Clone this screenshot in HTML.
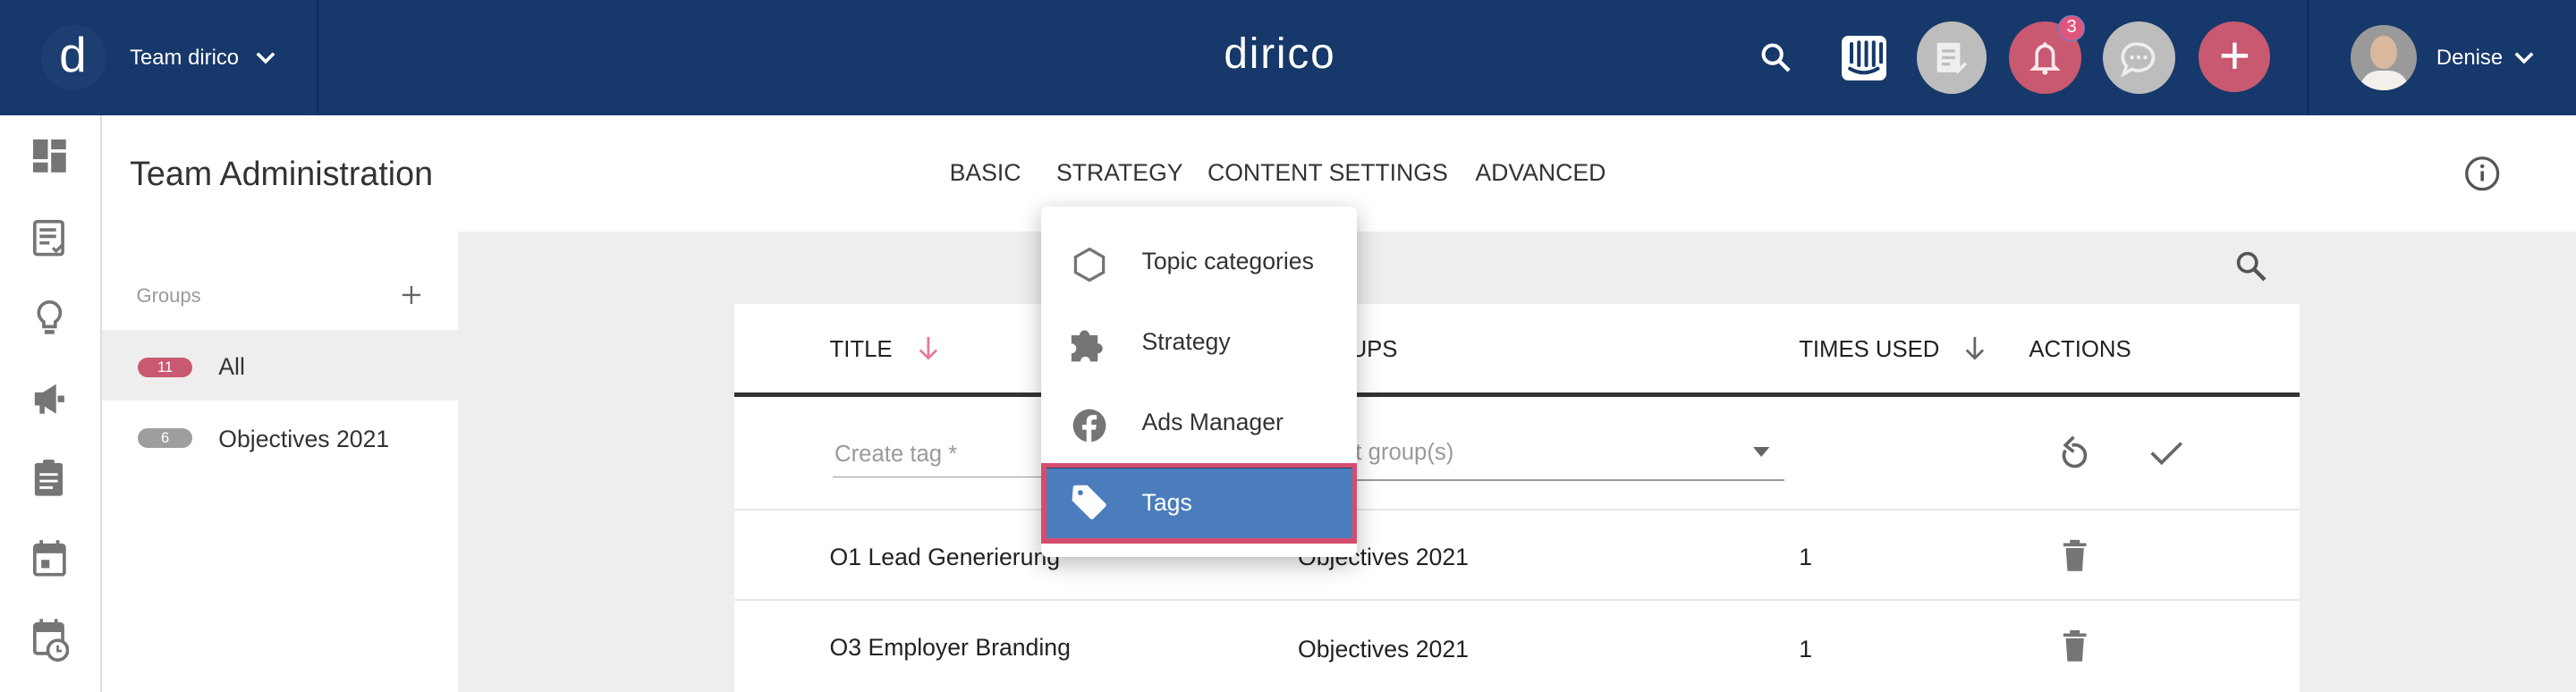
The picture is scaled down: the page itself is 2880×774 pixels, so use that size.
<!DOCTYPE html>
<html><head><meta charset="utf-8"><style>
html,body{margin:0;padding:0;width:2880px;height:774px;overflow:hidden;background:#fff}
#r{zoom:1.83673;width:1568px;height:422px;position:relative;font-family:"Liberation Sans",sans-serif;color:#333;overflow:hidden}
.a{position:absolute}
.hdr{left:0;top:0;width:1568px;height:70px;background:#16386a}
.t{white-space:nowrap}
.circ{border-radius:50%}
.tab{top:97px;font-size:14.5px;color:#333}
.mi{left:0;width:192px;height:49px}
.mi span{position:absolute;left:61px;top:16px;font-size:14.5px;color:#333}
.mi svg{position:absolute;left:17px;top:14px}
.rowtxt{font-size:14.5px;color:#222}
</style></head><body><div id="r">
<div class="a hdr"></div>
<div class="a" style="left:193px;top:0;width:1px;height:70px;background:#0f2c58"></div>
<div class="a" style="left:1404px;top:0;width:1px;height:70px;background:#0f2c58"></div>
<div class="a circ" style="left:25px;top:15px;width:40px;height:40px;background:#1d3e70"></div>
<div class="a t" style="left:36px;top:16px;font-size:30px;color:#fff;font-weight:300">d</div>
<div class="a t" style="left:79px;top:28px;font-size:13px;color:#fff">Team dirico</div>
<svg class="a" style="left:155px;top:31px" width="13" height="9" viewBox="0 0 13 9"><path d="M1.5 1.5l5 5 5-5" stroke="#fff" stroke-width="2" fill="none"/></svg>
<div class="a t" style="left:745px;top:18px;font-size:26px;color:#fff;letter-spacing:1px">dirico</div>
<svg class="a" style="left:1071px;top:25px" width="20" height="20" viewBox="0 0 20 20"><circle cx="8" cy="8" r="5.5" stroke="#fff" stroke-width="2.2" fill="none"/><path d="M12 12l6 6" stroke="#fff" stroke-width="2.4"/></svg>
<div class="a" style="left:1121px;top:22px;width:27px;height:27px;background:#fff;border-radius:4px"></div>
<svg class="a" style="left:1121px;top:22px" width="27" height="27" viewBox="0 0 27 27"><g stroke="#16386a" stroke-width="2.2" stroke-linecap="round"><path d="M6 5v11M10.5 4v14M15 4v14M19.5 4v14M24 5v11"/><path d="M5 20q8.5 5 17 0" fill="none"/></g></svg>
<div class="a circ" style="left:1167px;top:13px;width:42px;height:44px;background:#bdbdbd"></div>
<svg class="a" style="left:1177px;top:25px" width="22" height="22" viewBox="0 0 22 22"><rect x="2" y="1" width="14" height="18" rx="1" fill="#eee"/><path d="M5 6h8M5 10h8M5 14h5" stroke="#bdbdbd" stroke-width="1.8"/><path d="M12 16l2.5 2.5 5-5" stroke="#eee" stroke-width="2" fill="none"/></svg>
<div class="a circ" style="left:1223px;top:13px;width:44px;height:44px;background:#c85970"></div>
<svg class="a" style="left:1235px;top:24px" width="20" height="22" viewBox="0 0 20 22"><path d="M5 16V9a5 5 0 0 1 10 0v7l2 2H3z" fill="none" stroke="#fce8ee" stroke-width="2"/><circle cx="10" cy="20" r="1.6" fill="#fce8ee"/><circle cx="10" cy="3" r="1.2" fill="#fce8ee"/></svg>
<div class="a circ" style="left:1253px;top:9px;width:16px;height:16px;background:#e0557e;border:1px solid #5a8ad0;box-sizing:border-box;color:#fff;font-size:11px;text-align:center;line-height:14px">3</div>
<div class="a circ" style="left:1280px;top:13px;width:44px;height:44px;background:#bdbdbd"></div>
<svg class="a" style="left:1290px;top:24px" width="24" height="24" viewBox="0 0 24 24"><path d="M12 3a9 8 0 1 1-4 15.2L3 21l1.6-4.6A8 8 0 0 1 12 3z" fill="none" stroke="#eee" stroke-width="2"/><circle cx="8" cy="11" r="1.2" fill="#eee"/><circle cx="12" cy="11" r="1.2" fill="#eee"/><circle cx="16" cy="11" r="1.2" fill="#eee"/></svg>
<div class="a circ" style="left:1338px;top:13px;width:44px;height:43px;background:#c85970"></div>
<svg class="a" style="left:1350px;top:24px" width="20" height="20"><path d="M10 2v16M2 10h16" stroke="#fff" stroke-width="2.4"/></svg>
<div class="a circ" style="left:1431px;top:15px;width:40px;height:40px;background:#9a9a9a;overflow:hidden"><div class="a circ" style="left:12px;top:7px;width:16px;height:20px;background:#d9b8a0"></div><div class="a" style="left:5px;top:28px;width:30px;height:16px;background:#f3f0ec;border-radius:12px 12px 0 0"></div></div>
<div class="a t" style="left:1483px;top:28px;font-size:13px;color:#fff">Denise</div>
<svg class="a" style="left:1530px;top:31px" width="13" height="9" viewBox="0 0 13 9"><path d="M1.5 1.5l5 5 5-5" stroke="#fff" stroke-width="2" fill="none"/></svg>

<div class="a" style="left:61px;top:70px;width:1px;height:352px;background:#ddd"></div>
<svg class="a" style="left:20px;top:85px" width="22" height="320" viewBox="0 0 22 320" fill="#757575">
<rect x="0" y="0" width="9" height="12"/><rect x="11" y="0" width="9" height="6"/><rect x="0" y="14" width="9" height="6"/><rect x="11" y="8" width="9" height="12"/>
<g transform="translate(0,50)"><rect x="1" y="0" width="17" height="20" rx="1.5" fill="none" stroke="#757575" stroke-width="2"/><path d="M4 5h10M4 9h10M4 13h6" stroke="#757575" stroke-width="2"/><path d="M12 16l2 2 4-4" stroke="#757575" stroke-width="1.8" fill="none"/></g>
<g transform="translate(0,98)"><path d="M10 1a6.5 6.5 0 0 0-3.5 12v3h7v-3A6.5 6.5 0 0 0 10 1z" fill="none" stroke="#757575" stroke-width="2"/><rect x="7" y="18" width="6" height="2.5"/></g>
<g transform="translate(0,148)"><path d="M1 6h5l8-5v18l-8-5H1z"/><rect x="4" y="14" width="3" height="5"/><rect x="15" y="8" width="4" height="4"/></g>
<g transform="translate(0,195)"><rect x="1" y="2" width="17" height="20" rx="1.5"/><rect x="6" y="0" width="7" height="4" rx="1"/><path d="M4 9h11M4 13h11M4 17h8" stroke="#fff" stroke-width="1.6"/></g>
<g transform="translate(0,244)"><rect x="1" y="3" width="18" height="18" rx="1.5" fill="none" stroke="#757575" stroke-width="2"/><rect x="1" y="3" width="18" height="5"/><rect x="4" y="0" width="2" height="5"/><rect x="14" y="0" width="2" height="5"/><rect x="5" y="12" width="5" height="5"/></g>
<g transform="translate(0,292)"><rect x="1" y="3" width="17" height="18" rx="1.5" fill="none" stroke="#757575" stroke-width="2"/><rect x="1" y="3" width="17" height="5"/><rect x="4" y="0" width="2" height="5"/><rect x="13" y="0" width="2" height="5"/><circle cx="15" cy="19" r="6" fill="#fff" stroke="#757575" stroke-width="2"/><path d="M15 16v3.5h2.5" stroke="#757575" stroke-width="1.5" fill="none"/></g>
</svg>

<div class="a t" style="left:79px;top:94px;font-size:20.5px;color:#333">Team Administration</div>
<div class="a tab t" style="left:578px">BASIC</div>
<div class="a tab t" style="left:643px">STRATEGY</div>
<div class="a tab t" style="left:735px">CONTENT SETTINGS</div>
<div class="a tab t" style="left:898px">ADVANCED</div>
<svg class="a" style="left:1500px;top:95px" width="22" height="22" viewBox="0 0 22 22"><circle cx="11" cy="11" r="9.5" fill="none" stroke="#555" stroke-width="1.8"/><path d="M11 9.5v6" stroke="#555" stroke-width="2"/><circle cx="11" cy="6.5" r="1.2" fill="#555"/></svg>

<div class="a" style="left:279px;top:141px;width:1289px;height:281px;background:#eeeeee"></div>
<div class="a t" style="left:83px;top:173px;font-size:12px;color:#9a9a9a">Groups</div>
<svg class="a" style="left:244px;top:173px" width="13" height="13"><path d="M6.5 1v11M1 6.5h11" stroke="#666" stroke-width="1.3"/></svg>
<div class="a" style="left:62px;top:201px;width:217px;height:43px;background:#eeeeee"></div>
<div class="a" style="left:84px;top:218px;width:33px;height:12px;border-radius:6px;background:#c85970;color:#fff;font-size:9px;text-align:center;line-height:12px">11</div>
<div class="a t" style="left:133px;top:215px;font-size:14.5px;color:#333">All</div>
<div class="a" style="left:84px;top:261px;width:33px;height:12px;border-radius:6px;background:#9e9e9e;color:#fff;font-size:9px;text-align:center;line-height:12px">6</div>
<div class="a t" style="left:133px;top:259px;font-size:14.5px;color:#333">Objectives 2021</div>

<svg class="a" style="left:1360px;top:152px" width="22" height="22" viewBox="0 0 22 22"><circle cx="8" cy="8" r="5.5" stroke="#555" stroke-width="2" fill="none"/><path d="M12 12l6.5 6.5" stroke="#555" stroke-width="2.4"/></svg>

<div class="a" style="left:447px;top:185px;width:953px;height:237px;background:#fff"></div>
<div class="a t" style="left:505px;top:205px;font-size:14px;color:#222">TITLE</div>
<svg class="a" style="left:558px;top:204px" width="14" height="16"><path d="M7 1v13M2 9l5 5 5-5" stroke="#e8799a" stroke-width="1.5" fill="none"/></svg>
<div class="a t" style="left:790px;top:205px;font-size:14px;color:#222">GROUPS</div>
<div class="a t" style="left:1095px;top:205px;font-size:14px;color:#222">TIMES USED</div>
<svg class="a" style="left:1195px;top:204px" width="14" height="16"><path d="M7 1v13M2 9l5 5 5-5" stroke="#666" stroke-width="1.5" fill="none"/></svg>
<div class="a t" style="left:1235px;top:205px;font-size:14px;color:#222">ACTIONS</div>
<div class="a" style="left:447px;top:239px;width:953px;height:3px;background:#333"></div>
<div class="a t" style="left:508px;top:269px;font-size:14px;color:#9a9a9a">Create tag *</div>
<div class="a" style="left:507px;top:290px;width:140px;height:1px;background:#999"></div>
<div class="a t" style="left:790px;top:268px;font-size:14px;color:#9a9a9a">Select group(s)</div>
<svg class="a" style="left:1067px;top:272px" width="10" height="6"><path d="M0 0h10L5 6z" fill="#666"/></svg>
<div class="a" style="left:790px;top:292px;width:296px;height:1px;background:#999"></div>
<svg class="a" style="left:1252px;top:265px" width="20" height="22" viewBox="0 0 20 22"><path d="M5 9a6.5 6.5 0 1 0 4-3" fill="none" stroke="#666" stroke-width="2"/><path d="M10 1L5 6l5 4" fill="none" stroke="#666" stroke-width="2"/></svg>
<svg class="a" style="left:1308px;top:267px" width="22" height="18"><path d="M2 9l6 6L20 3" stroke="#666" stroke-width="2" fill="none"/></svg>
<div class="a" style="left:447px;top:310px;width:953px;height:1px;background:#e6e6e6"></div>
<div class="a" style="left:447px;top:365px;width:953px;height:1px;background:#e6e6e6"></div>
<div class="a t rowtxt" style="left:505px;top:331px">O1 Lead Generierung</div>
<div class="a t rowtxt" style="left:790px;top:331px">Objectives 2021</div>
<div class="a t rowtxt" style="left:1095px;top:331px">1</div>
<div class="a t rowtxt" style="left:505px;top:386px">O3 Employer Branding</div>
<div class="a t rowtxt" style="left:790px;top:387px">Objectives 2021</div>
<div class="a t rowtxt" style="left:1095px;top:387px">1</div>
<svg class="a" style="left:1255px;top:328px" width="16" height="20"><path d="M1 3h14v2H1zM5 1h6v2H5zM2.5 6h11l-1 14h-9z" fill="#757575"/></svg>
<svg class="a" style="left:1255px;top:383px" width="16" height="20"><path d="M1 3h14v2H1zM5 1h6v2H5zM2.5 6h11l-1 14h-9z" fill="#757575"/></svg>

<div class="a" style="left:634px;top:126px;width:192px;height:213px;background:#fff;border-radius:4px;box-shadow:0 4px 14px rgba(0,0,0,.28)">
 <div class="a mi" style="top:9px"><svg width="24" height="24" viewBox="0 0 24 24"><path d="M12 2.5l8.5 4.8v9.4L12 21.5l-8.5-4.8V7.3z" fill="none" stroke="#757575" stroke-width="1.8"/></svg><span>Topic categories</span></div>
 <div class="a mi" style="top:58px"><svg width="24" height="24" viewBox="0 0 24 24"><path d="M1 6h5a3 3 0 0 1 6 0h5v5a3 3 0 0 1 0 6v5h-4.5a3 3 0 0 0-6 0H1v-5a3 3 0 0 0 0-6z" fill="#757575"/></svg><span>Strategy</span></div>
 <div class="a mi" style="top:107px"><svg width="24" height="24" viewBox="0 0 24 24"><circle cx="12" cy="12" r="10" fill="#757575"/><path d="M13.2 22v-7.5h2.6l.4-3h-3V9.8c0-.9.3-1.5 1.6-1.5h1.6V5.6a20 20 0 0 0-2.4-.1c-2.3 0-3.8 1.4-3.8 4v2H7.6v3h2.6V22z" fill="#fff"/></svg><span>Ads Manager</span></div>
 <div class="a" style="left:0;top:156px;width:192px;height:49px;background:#d44d6e"></div>
 <div class="a" style="left:3px;top:159px;width:186px;height:43px;background:#4b7dbd;border-top:1px solid #2c3d63;box-sizing:border-box"></div>
 <svg class="a" style="left:17px;top:168px" width="24" height="24" viewBox="0 0 24 24"><path d="M2 3a1.5 1.5 0 0 1 1.5-1.5h7.2l11 11a1.5 1.5 0 0 1 0 2.1l-7.2 7.2a1.5 1.5 0 0 1-2.1 0l-11-11z" fill="#fff"/><circle cx="6.5" cy="6" r="1.6" fill="#4b7dbd"/></svg>
 <div class="a t" style="left:61px;top:172px;font-size:14.5px;color:#fff">Tags</div>
</div>
</div></body></html>
